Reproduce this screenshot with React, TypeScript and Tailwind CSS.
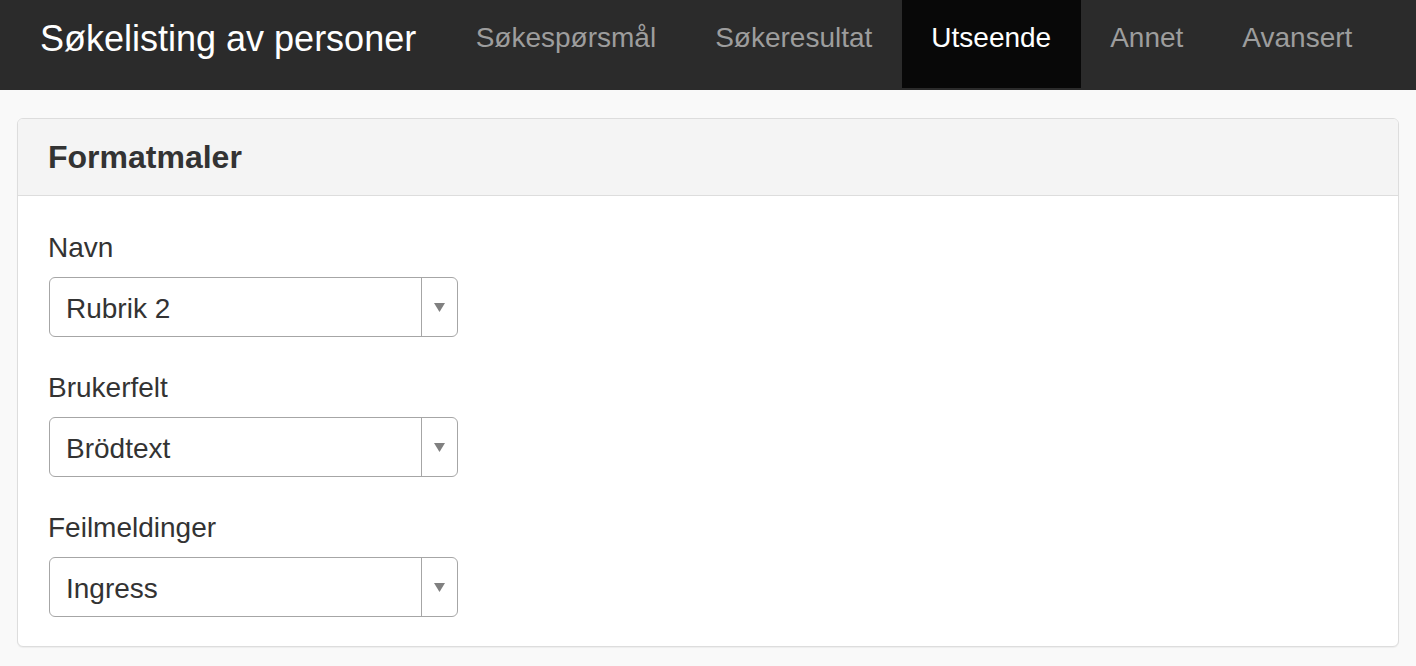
import React from 'react';

const NAV_ITEMS = ['Søkespørsmål', 'Søkeresultat', 'Utseende', 'Annet', 'Avansert'];

const FIELDS = [
  { label: 'Navn', value: 'Rubrik 2' },
  { label: 'Brukerfelt', value: 'Brödtext' },
  { label: 'Feilmeldinger', value: 'Ingress' },
];

function SelectBox({ value }: { value: string }) {
  return (
    <div className="ml-[1px] flex h-[60px] w-[409px] items-stretch rounded-[6px] border border-[#a6a6a6] bg-white">
      <div className="flex flex-1 items-center pl-[16px] pt-[3px] text-[28px] text-[#333]">{value}</div>
      <div className="flex w-[36px] items-center justify-center border-l border-[#a6a6a6]">
        <svg width="11" height="9" viewBox="0 0 11 9">
          <path d="M0 0 L11 0 L5.5 9 Z" fill="#808080" />
        </svg>
      </div>
    </div>
  );
}

export default function App() {
  return (
    <div className="min-h-[666px] bg-[#f9f9f9]" style={{ fontFamily: '"Liberation Sans", Arial, sans-serif' }}>
      <nav className="flex h-[90px] items-start bg-[#2b2b2b]">
        <div className="flex h-[88px] items-center pb-[11px] pl-[40px] pr-[30px] text-[36px] text-white">
          Søkelisting av personer
        </div>
        {NAV_ITEMS.map((item) => (
          <div
            key={item}
            className={`flex h-[88px] items-center px-[29.5px] pb-[12px] text-[28px] ${
              item === 'Utseende' ? 'bg-[#080808] text-white' : 'text-[#9d9d9d]'
            }`}
          >
            {item}
          </div>
        ))}
      </nav>

      <div className="px-[17px] pt-[28px]">
        <div className="overflow-hidden rounded-[6px] border border-[#dddddd] bg-white shadow-[0_1px_1px_rgba(0,0,0,0.05)]">
          <div className="flex h-[77px] items-center border-b border-[#dddddd] bg-[#f4f4f4] px-[30px]">
            <h3 className="text-[32px] font-bold text-[#333]">Formatmaler</h3>
          </div>
          <div className="flex flex-col gap-[33px] px-[30px] pt-[34px] pb-[29px]">
            {FIELDS.map((f) => (
              <div key={f.label} className="flex flex-col">
                <label className="mb-[11px] h-[36px] text-[28px] leading-[36px] text-[#333]">{f.label}</label>
                <SelectBox value={f.value} />
              </div>
            ))}
          </div>
        </div>
      </div>
    </div>
  );
}
